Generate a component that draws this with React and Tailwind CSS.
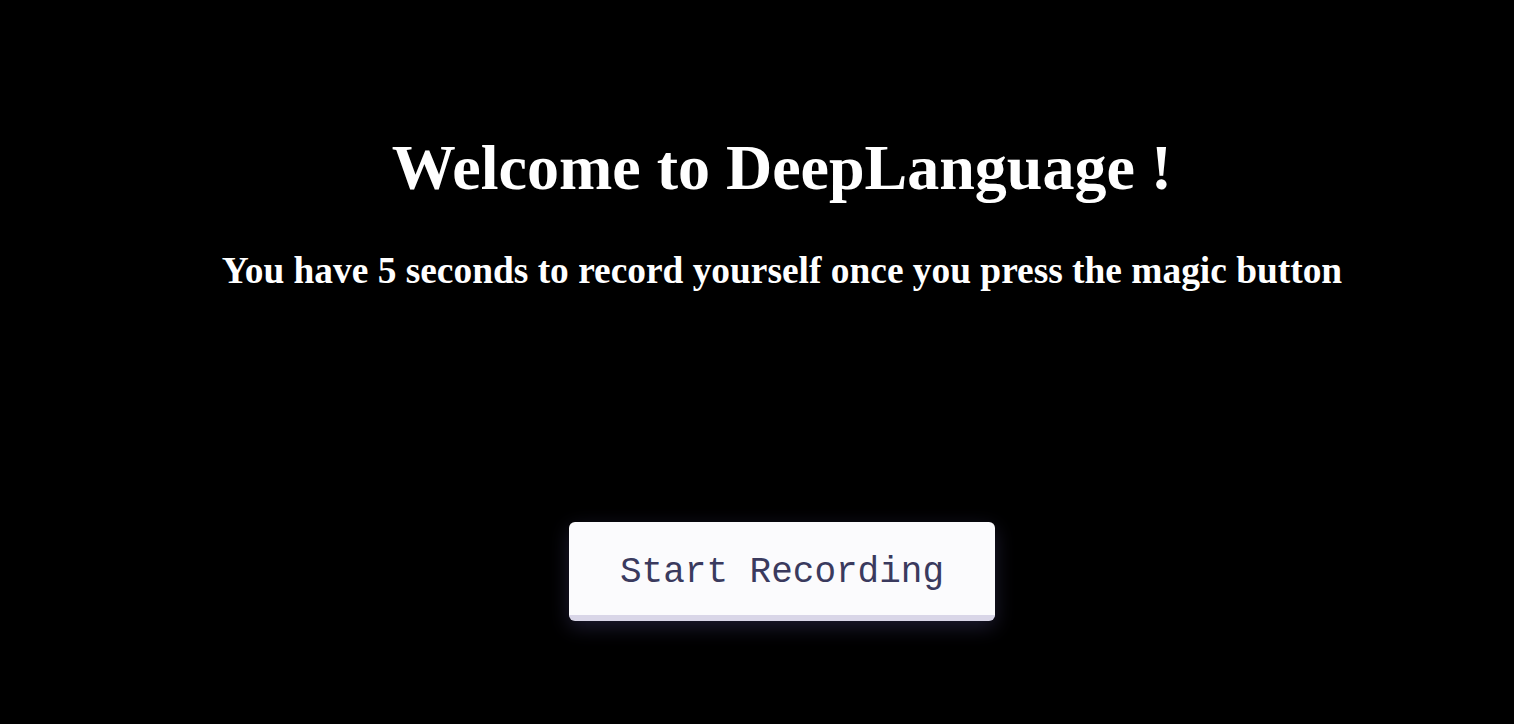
import React from "react";

const App = () => {
  return (
    <div className="min-h-screen w-full bg-black pl-[50px] flex flex-col items-center" style={{ fontFamily: '"Liberation Serif", serif' }}>
      <h1 className="mt-[131px] text-[64px] font-bold text-white leading-[1.15]">
        Welcome to DeepLanguage !
      </h1>
      <h2 className="mt-[44px] text-[37.4px] font-bold text-white leading-[1.15]">
        You have 5 seconds to record yourself once you press the magic button
      </h2>
      <button
        className="mt-[230px] w-[426px] h-[99px] pt-[10px] rounded-[6px] bg-[#fbfbfd] border-b-[6px] border-[#d9d6e8] text-[#3a3a5e] text-[36px] shadow-[0_6px_20px_rgba(120,110,200,0.25)]"
        style={{ fontFamily: '"Liberation Mono", monospace' }}
      >
        Start Recording
      </button>
    </div>
  );
};

export default App;
